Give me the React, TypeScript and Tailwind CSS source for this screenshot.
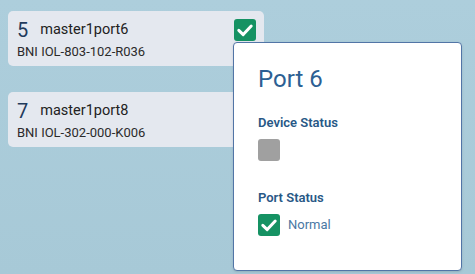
import React from 'react';

function Check({ size = 22 }: { size?: number }) {
  return (
    <div className="flex items-center justify-center rounded-[3px] bg-[#159263]" style={{ width: size, height: size }}>
      <svg width="22" height="22" viewBox="0 0 22 22" fill="none">
        <path d="M4.8 11.4 L9.2 15.6 L17.2 7" stroke="white" strokeWidth="3" strokeLinecap="round" strokeLinejoin="round" />
      </svg>
    </div>
  );
}

type PortCardProps = {
  num: string;
  name: string;
  device: string;
  ok?: boolean;
};

function PortCard({ num, name, device, ok }: PortCardProps) {
  return (
    <div className="flex w-[256px] justify-between rounded-[5px] bg-[#e4e8ef] pl-[9px] pr-2 pt-[7px] pb-[6px]">
      <div className="flex flex-col">
        <div className="flex items-center gap-[12px]">
          <span className="text-[20px] leading-6 text-[#1f3a5c]">{num}</span>
          <span className="text-[14.5px] leading-5 text-[#222]">{name}</span>
        </div>
        <span className="mt-[2px] text-[13px] leading-4 text-[#2b2b2b]">{device}</span>
      </div>
      {ok && (
        <div className="mt-[1px]">
          <Check />
        </div>
      )}
    </div>
  );
}

export default function App() {
  return (
    <div className="relative h-[274px] w-[475px] overflow-hidden bg-gradient-to-b from-[#adcedc] to-[#a7c9d7] font-['Roboto',sans-serif]">
      <div className="flex flex-col gap-[26px] pl-2 pt-[11px]">
        <PortCard num="5" name="master1port6" device="BNI IOL-803-102-R036" ok />
        <PortCard num="7" name="master1port8" device="BNI IOL-302-000-K006" />
      </div>

      {/* popover */}
      <div className="absolute left-[233px] top-[42px] h-[229px] w-[229px] rounded-[4px] border border-[#5275a6] bg-white pl-6 pt-5 shadow-sm">
        <h2 className="text-[24px] leading-8 text-[#2c5f93]">Port 6</h2>
        <h3 className="mt-[18px] text-[13px] font-semibold leading-5 text-[#285886]">Device Status</h3>
        <div className="mt-[6px] h-[22px] w-[22px] rounded-[3px] bg-[#a0a0a0]" />
        <h3 className="mt-[27px] text-[13px] font-semibold leading-5 text-[#285886]">Port Status</h3>
        <div className="mt-[6px] flex items-center gap-2">
          <Check />
          <span className="text-[13px] leading-5 text-[#4a78a3]">Normal</span>
        </div>
      </div>
    </div>
  );
}
